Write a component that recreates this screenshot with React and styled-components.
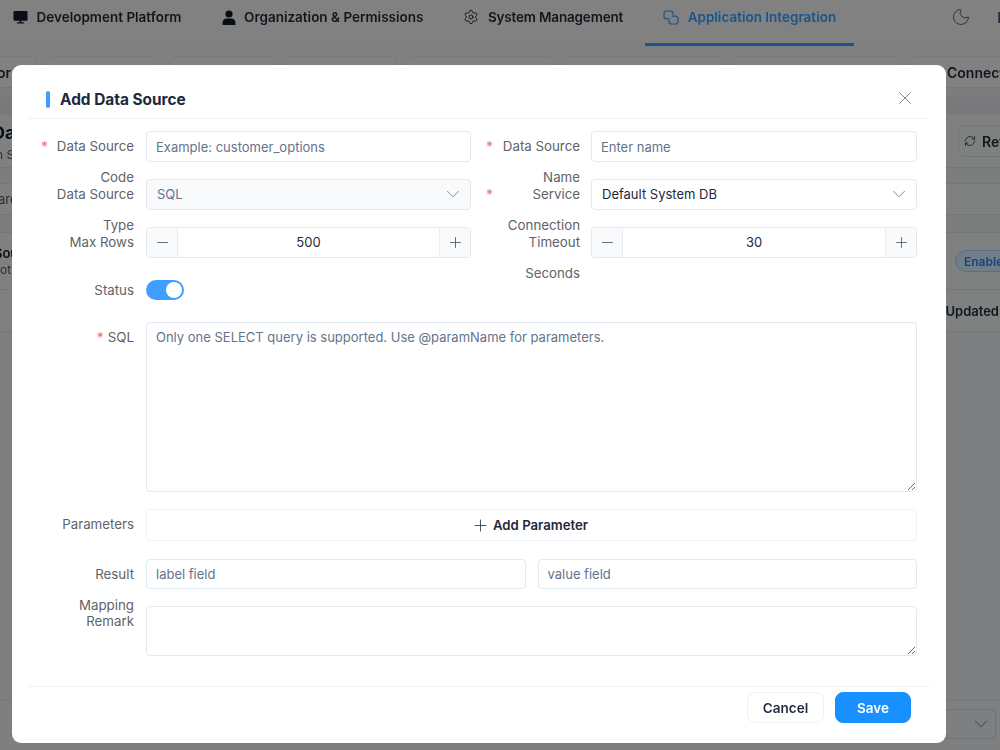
import React from 'react';
import styled, { createGlobalStyle } from 'styled-components';
import { Settings, Moon, RefreshCw, X, ChevronDown, Minus, Plus } from 'lucide-react';

const Global = createGlobalStyle`
  html, body { margin: 0; padding: 0; height: 100%; overflow: hidden; }
  body { font-family: Inter, "Noto Sans", "Liberation Sans", sans-serif; font-size: 14px; color: #1e293b; }
  * { box-sizing: border-box; }
`;

/* ---------- page behind the dialog ---------- */
const Page = styled.div`
  width: 1000px; height: 750px; overflow: hidden; background: #e2e3e5;
  display: flex; flex-direction: column;
  filter: blur(0.4px);
`;
const Nav = styled.nav`
  height: 46px; flex: none; background: #ebebeb; display: flex; align-items: stretch; gap: 4px;
  margin-left: -5px; white-space: nowrap;
`;
const NavItem = styled.div`
  flex: none; display: flex; align-items: center; gap: 8.5px; padding: 0 18px; font-weight: 600; font-size: 13.5px;
  letter-spacing: ${p => p.$spacing || 'normal'};
  color: ${p => (p.$active ? '#2f9bff' : '#1f2937')};
  border-bottom: 3px solid ${p => (p.$active ? '#2f9bff' : 'transparent')};
  padding-bottom: 9px;
`;
const NavTools = styled.div`
  flex: none; margin-left: 93px; display: flex; align-items: center; gap: 26px; color: #4b5563; white-space: nowrap; font-weight: 600;
  padding-bottom: 12px;
`;
const Tabs = styled.div`
  height: 42px; flex: none; display: flex; gap: 10px; align-items: flex-end; margin-left: -60px;
  border-bottom: 1px solid #d6d7da; background: #e8e9ea; padding-top: 11px;
`;
const Tab = styled.div`
  width: ${p => p.$w}px; flex: none; height: 31px; background: #ebebeb; border: 1px solid #dedfe2; border-bottom: 0;
  border-radius: 6px 6px 0 0; font-weight: 600; font-size: 14px; color: #1f2937; display: flex; align-items: center;
  justify-content: ${p => (p.$left ? 'flex-start' : 'flex-end')}; padding: 0 25px 0 36px; white-space: nowrap;
`;
const Band = styled.div`
  margin-top: 9px; height: 18px; flex: none; background: #dcdde1;
`;
const TitleCard = styled.div`
  height: 53px; flex: none; display: flex; justify-content: space-between; align-items: center; background: #e8e9ea;
  border-bottom: 1px solid #d6d7da; margin-left: -8px;
`;
const TitleText = styled.div`
  display: flex; flex-direction: column; gap: 2px; white-space: nowrap;
`;
const Title = styled.div`font-size: 18px; font-weight: 700; color: #111827; line-height: 24px;`;
const Sub = styled.div`font-size: 12px; color: #4b5563; margin-left: 4px;`;
const RefreshBtn = styled.div`
  display: flex; align-items: center; gap: 6px; width: 70px; margin-right: -28px; height: 32px; padding-left: 5px; flex: none;
  border: 1px solid #d6d7da; border-radius: 6px; font-weight: 600; color: #1f2937; overflow: hidden; white-space: nowrap;
  svg { flex: none; }
`;
const Filter = styled.div`
  margin-top: 15px; height: 32px; flex: none; background: #e8e9ea; border-top: 1px solid #d6d7da; border-bottom: 1px solid #d6d7da;
  color: #4b5563; font-size: 13px; display: flex; align-items: center; margin-left: -18px;
`;
const Row = styled.div`
  margin-top: 17px; height: 58px; flex: none; background: #e8e9ea; border-top: 1px solid #d6d7da; border-bottom: 1px solid #d6d7da;
  display: flex; align-items: center; justify-content: space-between; margin-left: -6px; margin-right: -27px;
`;
const RowText = styled.div`display: flex; flex-direction: column; gap: 1px; font-size: 13px;`;
const RowTitle = styled.div`font-weight: 600; color: #111827;`;
const RowSub = styled.div`color: #4b5563; font-size: 12px; margin-left: -3px;`;
const Pill = styled.div`
  width: 72px; height: 22px; border-radius: 11px; background: #cfe3fb; border: 1px solid #a9c8ee; color: #2f7fd8;
  font-size: 12px; font-weight: 600; display: flex; align-items: center; padding-left: 8px; overflow: hidden;
`;
const HeadRow = styled.div`
  height: 42px; flex: none; background: #e8e9ea; border-bottom: 1px solid #d6d7da; display: flex; align-items: center;
  justify-content: flex-end; font-size: 13px; font-weight: 600; color: #1f2937; white-space: nowrap; margin-right: -16px;
`;
const Fill = styled.div`flex: 1; background: #e4e5e7;`;
const Pager = styled.div`
  height: 50px; flex: none; background: #e6e7e9; border-top: 1px solid #d6d7da; display: flex; justify-content: flex-end; padding-top: 8px;
`;
const PagerSelect = styled.div`
  width: 60px; height: 30px; margin-right: 4px; border: 1px solid #d0d1d5; border-radius: 4px; display: flex; align-items: center;
  justify-content: flex-end; padding-right: 3px; color: #4b5563;
`;

/* ---------- dialog ---------- */
const Overlay = styled.div`
  position: fixed; inset: 0; background: rgba(0, 0, 0, 0.45); padding: 65px 0 0 12px;
`;
const Dialog = styled.div`
  width: 934px; height: 678px; background: #fff; border-radius: 9px; padding: 0 16px; display: flex; flex-direction: column;
`;
const Header = styled.header`
  height: 54px; flex: none; border-bottom: 1px solid #f1f3f6; display: flex; align-items: center; justify-content: space-between;
  padding: 16px 14px 0 18px;
`;
const HeaderTitle = styled.h2`
  margin: 0; font-size: 15.4px; font-weight: 700; color: #1e293b; display: flex; align-items: center; gap: 10px;
  &::before { content: ''; width: 4px; height: 17px; border-radius: 2px; background: #3b9eff; }
`;
const CloseBtn = styled.button`
  background: none; border: 0; padding: 0; width: 22px; height: 22px; margin-top: -3px; display: flex; color: #6b7280;
`;
const Form = styled.form`
  flex: 1; padding: 12px 13px 0 12px; display: flex; flex-direction: column; gap: 17px;
`;
const TwoCols = styled.div`
  display: grid; grid-template-columns: 431px 432px; column-gap: 14px;
  & > *:nth-child(2) label { padding-right: 11px; }
`;
const Item = styled.div`
  display: flex; align-items: flex-start; height: ${p => p.$h || 'auto'};
`;
const Label = styled.label`
  width: 106px; height: 31px; flex: none; padding-right: 12px; display: flex; justify-content: flex-end; color: #5f6368;
  font-size: 13.3px; line-height: 31px; text-align: right;
  ${p => p.$tight && 'line-height: 17px; padding-top: 7px;'}
`;
const Star = styled.span`
  color: #f56c6c; margin-right: 4px; flex: none; font-size: 14px; width: 7px; margin-left: 1px;
`;
const Control = styled.div`
  flex: 1; min-width: 0; display: flex; gap: 12px;
`;
const fieldCss = `
  width: 100%; border: 1px solid #e2e8f0; border-radius: 4px; background: #fff; color: #1e293b;
  font-family: inherit; font-size: 13px; outline: none;
  &::placeholder { color: #64748b; opacity: 1; }
`;
const Input = styled.input`
  ${fieldCss}
  height: ${p => p.$h || 31}px; padding: 0 9px;
  flex: 1; min-width: 0;
`;
const Area = styled.textarea`
  ${fieldCss}
  display: block; height: ${p => p.$h}px; padding: 5px 9px; line-height: 18px; resize: vertical;
`;
const Select = styled.div`
  width: 100%; height: 31px; border: 1px solid #e2e8f0; border-radius: 4px; display: flex; align-items: center;
  justify-content: space-between; padding: 0 6px 1px 10px; font-size: 13px;
  background: ${p => (p.$disabled ? '#f8fafc' : '#fff')};
  color: ${p => (p.$disabled ? '#64748b' : '#1e293b')};
`;
const Stepper = styled.div`
  width: 100%; height: 31px; border: 1px solid #e2e8f0; border-radius: 4px; display: flex; overflow: hidden;
`;
const StepBtn = styled.span`
  width: 31px; flex: none; background: #f8fafc; display: flex; align-items: center; justify-content: center; color: #475569;
  ${p => (p.$right ? 'border-left' : 'border-right')}: 1px solid #e8edf3;
`;
const StepValue = styled.input`
  flex: 1; min-width: 0; border: 0; outline: none; text-align: center; font-family: inherit; font-size: 13px; color: #1e293b;
  background: #fff; padding: 0 0 2px;
`;
const Switch = styled.span`
  width: 38px; height: 20px; margin-top: 5px; border-radius: 10px; background: #409eff; display: flex; justify-content: flex-end;
  align-items: center; padding-right: 2px;
  &::after { content: ''; width: 16px; height: 16px; border-radius: 50%; background: #fff; }
`;
const AddBtn = styled.button`
  width: 100%; height: 32px; border: 1px solid #eef1f5; border-radius: 4px; background: #fff; font-family: inherit; font-size: 13.2px;
  font-weight: 600; color: #1e293b; display: flex; align-items: center; justify-content: center; gap: 3px; padding: 0 4px 0 0;
`;
const Footer = styled.footer`
  height: 57px; flex: none; border-top: 1px solid #eef1f5; display: flex; justify-content: flex-end; gap: 11px; padding: 5px 19px 0 0;
`;
const Btn = styled.button`
  width: ${p => (p.$primary ? 76 : 77)}px; height: 31px; border-radius: 8px; font-family: inherit; font-size: 13.5px; font-weight: 600;
  border: 1px solid ${p => (p.$primary ? '#1890ff' : '#eef1f5')};
  background: ${p => (p.$primary ? '#1890ff' : '#fff')};
  color: ${p => (p.$primary ? '#fff' : '#1e293b')};
`;

const MonitorIcon = () => (
  <svg width="15" height="15" viewBox="0 0 16 16" fill="#111827">
    <rect x="0.5" y="1" width="15" height="10.5" rx="1" />
    <rect x="4" y="13" width="8" height="1.4" rx=".5" />
    <rect x="7" y="11" width="2" height="2.5" />
  </svg>
);
const UserIcon = () => (
  <svg width="14" height="15" viewBox="0 0 14 15" fill="#111827">
    <circle cx="7" cy="4" r="3.6" />
    <path d="M0.6 15v-2.6C0.6 10 2.6 8.6 4.6 8.6h4.8c2 0 4 1.4 4 3.8V15z" />
  </svg>
);
const LinkIcon = () => (
  <svg width="16" height="15" viewBox="0 0 16 15" fill="none" stroke="#2f9bff" strokeWidth="1.2" strokeLinecap="round">
    <path d="M6.5 8.8H3.4A2.6 2.6 0 0 1 1 6.2V3.6A2.6 2.6 0 0 1 3.4 1h4A2.6 2.6 0 0 1 10 3.6v1" />
    <path d="M9.5 6.2h3.1A2.6 2.6 0 0 1 15 8.8v2.6a2.6 2.6 0 0 1-2.4 2.6h-4A2.6 2.6 0 0 1 6 11.4v-1" />
  </svg>
);

const Background = () => (
  <Page>
    <Nav>
      <NavItem><MonitorIcon />Development Platform</NavItem>
      <NavItem><UserIcon />Organization &amp; Permissions</NavItem>
      <NavItem $spacing="-0.17px"><Settings size={16} strokeWidth={1.4} />System Management</NavItem>
      <NavItem $active><LinkIcon />Application Integration</NavItem>
      <NavTools><Moon size={20} strokeWidth={1.1} />Ed</NavTools>
    </Nav>
    <Tabs>
      <Tab $w={97}>Monitor</Tab>
      <Tab $w={112} />
      <Tab $w={106} />
      <Tab $w={112} />
      <Tab $w={147} />
      <Tab $w={159} />
      <Tab $w={167} />
      <Tab $w={200} $left>Connection</Tab>
    </Tabs>
    <Band />
    <TitleCard>
      <TitleText><Title>Data</Title><Sub>n SQL</Sub></TitleText>
      <RefreshBtn><RefreshCw size={12} strokeWidth={1.5} />Refresh</RefreshBtn>
    </TitleCard>
    <Filter>Search</Filter>
    <Row>
      <RowText><RowTitle>Sou</RowTitle><RowSub>Not</RowSub></RowText>
      <Pill>Enabled</Pill>
    </Row>
    <HeadRow>Updated At</HeadRow>
    <Fill />
    <Pager><PagerSelect><ChevronDown size={22} strokeWidth={0.9} /></PagerSelect></Pager>
  </Page>
);

const Chevron = () => <ChevronDown size={22} strokeWidth={0.9} color="#64748b" />;

const NumberField = ({ value }) => (
  <Stepper>
    <StepBtn><Minus size={17} strokeWidth={1.2} /></StepBtn>
    <StepValue value={value} readOnly />
    <StepBtn $right><Plus size={17} strokeWidth={1.2} /></StepBtn>
  </Stepper>
);

export default function App() {
  return (
    <>
      <Global />
      <Background />
      <Overlay>
        <Dialog>
          <Header>
            <HeaderTitle>Add Data Source</HeaderTitle>
            <CloseBtn type="button"><X size={22} strokeWidth={0.9} /></CloseBtn>
          </Header>
          <Form onSubmit={e => e.preventDefault()}>
            <TwoCols>
              <Item>
                <Label><Star>*</Star><span>Data Source Code</span></Label>
                <Control><Input placeholder="Example: customer_options" /></Control>
              </Item>
              <Item>
                <Label><Star>*</Star><span>Data Source Name</span></Label>
                <Control><Input placeholder="Enter name" /></Control>
              </Item>
            </TwoCols>
            <TwoCols>
              <Item>
                <Label><span>Data Source Type</span></Label>
                <Control><Select $disabled>SQL<Chevron /></Select></Control>
              </Item>
              <Item>
                <Label><Star>*</Star><span>Service Connection</span></Label>
                <Control><Select>Default System DB<Chevron /></Select></Control>
              </Item>
            </TwoCols>
            <TwoCols>
              <Item>
                <Label><span>Max Rows</span></Label>
                <Control><NumberField value="500" /></Control>
              </Item>
              <Item>
                <Label><span>Timeout Seconds</span></Label>
                <Control><NumberField value="30" /></Control>
              </Item>
            </TwoCols>
            <Item $h="30px">
              <Label><span>Status</span></Label>
              <Switch />
            </Item>
            <Item>
              <Label $tight><Star>*</Star><span>SQL</span></Label>
              <Control><Area $h={170} placeholder="Only one SELECT query is supported. Use @paramName for parameters." /></Control>
            </Item>
            <Item $h="33px">
              <Label><span>Parameters</span></Label>
              <Control><AddBtn type="button"><Plus size={19} strokeWidth={1} />Add Parameter</AddBtn></Control>
            </Item>
            <Item $h="30px">
              <Label><span>Result Mapping</span></Label>
              <Control>
                <Input $h={30} placeholder="label field" />
                <Input $h={30} placeholder="value field" />
              </Control>
            </Item>
            <Item>
              <Label><span>Remark</span></Label>
              <Control><Area $h={50} /></Control>
            </Item>
          </Form>
          <Footer>
            <Btn type="button">Cancel</Btn>
            <Btn type="button" $primary>Save</Btn>
          </Footer>
        </Dialog>
      </Overlay>
    </>
  );
}
